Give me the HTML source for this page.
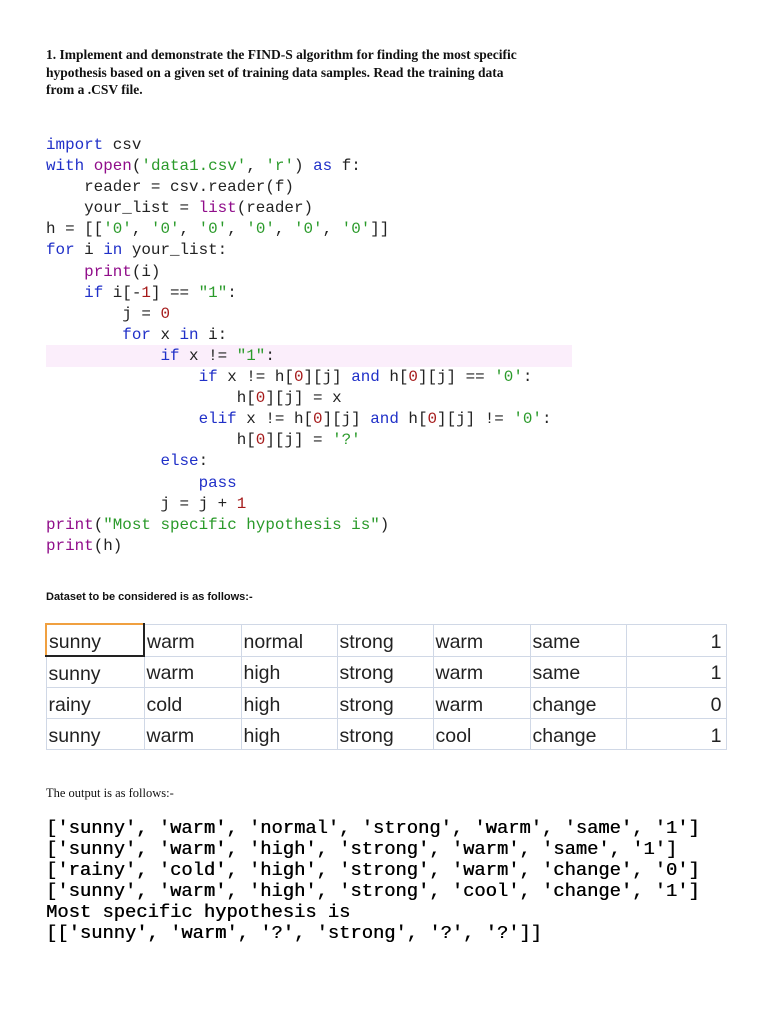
<!DOCTYPE html>
<html><head><meta charset="utf-8"><style>
body{margin:0;width:768px;height:1024px;background:#fff;position:relative;overflow:hidden}
.h{position:absolute;left:46px;top:46px;font:bold 13.5px/17.5px "Liberation Serif",serif;color:#111;width:482px}
pre{margin:0;position:absolute;font-family:"Liberation Mono",monospace;white-space:pre}
.code{left:46px;top:135px;font-size:15.9px;line-height:21.1px;color:#222}
.k{color:#2030c8}.b{color:#900d8a}.s{color:#2a9a2a}.n{color:#a51a1a}
.hl{position:absolute;left:46px;top:345px;width:526px;height:22px;background:#fbeefb}
.ds{position:absolute;left:46px;top:591px;font:bold 11px "Liberation Sans",sans-serif;color:#111}
.out{position:absolute;left:46px;top:786px;font:12.5px "Liberation Serif",serif;color:#111}
table{position:absolute;left:45px;top:623px;border-collapse:collapse;font:19.5px "Liberation Sans",sans-serif;color:#222}
td{border:1px solid #d0d8e6;height:27px;padding:3px 0 0 2px;vertical-align:middle;line-height:22px}
td:last-child{text-align:right;padding-right:4px}
.o{left:46px;top:818px;font-size:18.8px;line-height:21px;color:#000;text-shadow:0.4px 0 0 #000}
</style></head><body>
<div class="h">1. Implement and demonstrate the FIND-S algorithm for finding the most specific hypothesis based on a given set of training data samples. Read the training data<br>from a .CSV file.</div>
<div class="hl"></div>
<pre class="code"><span class="k">import</span> csv
<span class="k">with</span> <span class="b">open</span>(<span class="s">'data1.csv'</span>, <span class="s">'r'</span>) <span class="k">as</span> f:
    reader = csv.reader(f)
    your_list = <span class="b">list</span>(reader)
h = [[<span class="s">'0'</span>, <span class="s">'0'</span>, <span class="s">'0'</span>, <span class="s">'0'</span>, <span class="s">'0'</span>, <span class="s">'0'</span>]]
<span class="k">for</span> i <span class="k">in</span> your_list:
    <span class="b">print</span>(i)
    <span class="k">if</span> i[-<span class="n">1</span>] == <span class="s">"1"</span>:
        j = <span class="n">0</span>
        <span class="k">for</span> x <span class="k">in</span> i:
            <span class="k">if</span> x != <span class="s">"1"</span>:
                <span class="k">if</span> x != h[<span class="n">0</span>][j] <span class="k">and</span> h[<span class="n">0</span>][j] == <span class="s">'0'</span>:
                    h[<span class="n">0</span>][j] = x
                <span class="k">elif</span> x != h[<span class="n">0</span>][j] <span class="k">and</span> h[<span class="n">0</span>][j] != <span class="s">'0'</span>:
                    h[<span class="n">0</span>][j] = <span class="s">'?'</span>
            <span class="k">else</span>:
                <span class="k">pass</span>
            j = j + <span class="n">1</span>
<span class="b">print</span>(<span class="s">"Most specific hypothesis is"</span>)
<span class="b">print</span>(h)</pre>
<div class="ds">Dataset to be considered is as follows:-</div>
<table>
<colgroup><col style="width:98px"><col style="width:97px"><col style="width:96px"><col style="width:96px"><col style="width:97px"><col style="width:96px"><col style="width:100px"></colgroup>
<tr><td style="border:2px solid #222;border-top-color:#f0a040;border-left-color:#f0a040">sunny</td><td>warm</td><td>normal</td><td>strong</td><td>warm</td><td>same</td><td>1</td></tr>
<tr><td>sunny</td><td>warm</td><td>high</td><td>strong</td><td>warm</td><td>same</td><td>1</td></tr>
<tr><td>rainy</td><td>cold</td><td>high</td><td>strong</td><td>warm</td><td>change</td><td>0</td></tr>
<tr><td>sunny</td><td>warm</td><td>high</td><td>strong</td><td>cool</td><td>change</td><td>1</td></tr>
</table>
<div class="out">The output is as follows:-</div>
<pre class="o">['sunny', 'warm', 'normal', 'strong', 'warm', 'same', '1']
['sunny', 'warm', 'high', 'strong', 'warm', 'same', '1']
['rainy', 'cold', 'high', 'strong', 'warm', 'change', '0']
['sunny', 'warm', 'high', 'strong', 'cool', 'change', '1']
Most specific hypothesis is
[['sunny', 'warm', '?', 'strong', '?', '?']]</pre>
</body></html>
